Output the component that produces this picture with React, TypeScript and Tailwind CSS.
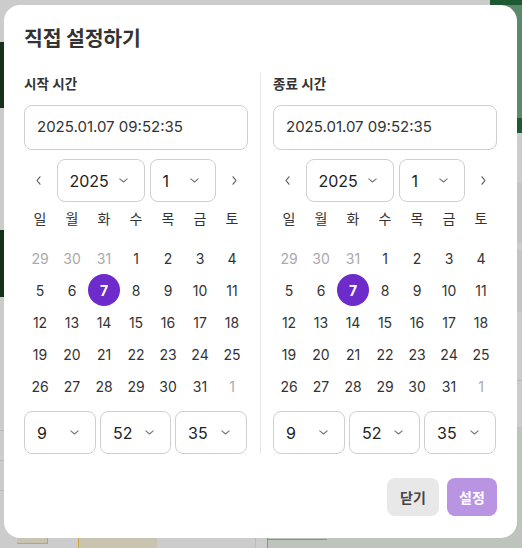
import React from "react";

const FONT = { fontFamily: "Inter, 'Noto Sans CJK KR', 'Noto Sans', sans-serif" };

function ChevronDown() {
  return (
    <svg width="9" height="5" viewBox="0 0 9 5" fill="none">
      <path d="M0.8 0.8L4.5 4L8.2 0.8" stroke="#777" strokeWidth="1.1" strokeLinecap="round" strokeLinejoin="round" />
    </svg>
  );
}

function ChevronSide({ dir }: { dir: "l" | "r" }) {
  return (
    <svg width="5" height="9" viewBox="0 0 5 9" fill="none">
      {dir === "l" ? (
        <path d="M4 0.8L1 4.5L4 8.2" stroke="#555" strokeWidth="1.1" strokeLinecap="round" strokeLinejoin="round" />
      ) : (
        <path d="M1 0.8L4 4.5L1 8.2" stroke="#555" strokeWidth="1.1" strokeLinecap="round" strokeLinejoin="round" />
      )}
    </svg>
  );
}

function SelectBox({ value, w }: { value: string; w: string }) {
  return (
    <div className={`${w} h-[43px] border border-[#cfcfcf] rounded-[8px] flex items-center justify-between pl-[12px] pr-[16px] bg-white`}>
      <span className="text-[16px] text-[#222] leading-none">{value}</span>
      <ChevronDown />
    </div>
  );
}

const WEEK = ["일", "월", "화", "수", "목", "금", "토"];
const DAYS: { d: number; muted?: boolean }[] = [
  { d: 29, muted: true }, { d: 30, muted: true }, { d: 31, muted: true },
  ...Array.from({ length: 31 }, (_, i) => ({ d: i + 1 })),
  { d: 1, muted: true },
];

function Column({ label }: { label: string }) {
  return (
    <div className="w-[224px] pt-[1px] flex flex-col">
      <div className="h-[20px] flex items-center text-[13.5px] font-semibold text-[#333] leading-[20px]">{label}</div>
      <div className="mt-[11px] h-[45px] border border-[#cfcfcf] rounded-[8px] flex items-center pl-[12px] text-[15px] text-[#333]">
        2025.01.07 09:52:35
      </div>
      <div className="mt-[9px] h-[43px] flex items-center justify-between">
        <div className="w-[28px] h-[28px] flex items-center justify-center">
          <ChevronSide dir="l" />
        </div>
        <div className="flex gap-[5px]">
          <SelectBox value="2025" w="w-[88px]" />
          <SelectBox value="1" w="w-[66px]" />
        </div>
        <div className="w-[28px] h-[28px] flex items-center justify-center">
          <ChevronSide dir="r" />
        </div>
      </div>
      <div className="grid grid-cols-7 h-[32px]">
        {WEEK.map((w) => (
          <div key={w} className="flex items-center justify-center text-[14px] text-[#333]">
            {w}
          </div>
        ))}
      </div>
      <div className="mt-[8px] grid grid-cols-7">
        {DAYS.map((x, i) => (
          <div key={i} className="h-[32px] flex items-center justify-center">
            {x.d === 7 && !x.muted ? (
              <div className="w-[32px] h-[32px] rounded-full bg-[#6d2bcb] flex items-center justify-center text-white font-bold text-[14px]">
                7
              </div>
            ) : (
              <span className={`text-[14px] ${x.muted ? "text-[#aaaaaa]" : "text-[#333]"}`}>{x.d}</span>
            )}
          </div>
        ))}
      </div>
      <div className="mt-[9px] flex gap-[4px]">
        <SelectBox value="9" w="w-[72px]" />
        <SelectBox value="52" w="w-[71px]" />
        <SelectBox value="35" w="w-[72px]" />
      </div>
    </div>
  );
}

export default function App() {
  return (
    <div className="relative w-[522px] h-[548px] overflow-hidden bg-[#cccccc]" style={FONT}>
      {/* backdrop page (dimmed) */}
      <div className="absolute left-0 top-[42px] w-[8px] h-[66px] bg-[#17301a]" />
      <div className="absolute left-0 top-[230px] w-[8px] h-[67px] bg-[#17301a]" />
      <div className="absolute left-0 top-[430px] w-[8px] h-px bg-[#bbbbbb]" />
      <div className="absolute left-0 top-[460px] w-[8px] h-px bg-[#bbbbbb]" />
      <div className="absolute left-0 top-[490px] w-[8px] h-px bg-[#bbbbbb]" />
      <div className="absolute left-[490px] top-0 w-[32px] h-[5px] bg-[#1d5a32]" />
      <div className="absolute left-[490px] top-[5px] w-[32px] h-[113px] bg-[#5b8a6a]" />
      <div className="absolute left-[490px] top-[118px] w-[32px] h-[15px] bg-[#1f5a34]" />
      <div className="absolute left-[490px] top-[183px] w-[32px] h-[60px] bg-[#c4c4c8]" />
      <div className="absolute left-[490px] top-[250px] w-[32px] h-[62px] bg-[#c4c4c8]" />
      <div className="absolute left-[490px] top-[380px] w-[32px] h-px bg-[#b8b8b8]" />
      <div className="absolute left-[490px] top-[427px] w-[32px] h-[121px] bg-[#bcc4bc]" />
      <div className="absolute left-[17px] top-[530px] w-[31px] h-[14px] bg-[#c8c4b0] border-r border-b border-[#c9a640]" />
      <div className="absolute left-[78px] top-[530px] w-[79px] h-[18px] bg-[#c8c4b0] border-l border-[#c9a640]" />
      <div className="absolute left-[255px] top-[530px] w-px h-[18px] bg-[#bbbbbb]" />
      <div className="absolute left-[267px] top-[530px] w-[255px] h-[18px] bg-[#bcc4bc] border-l border-[#7aa070]" />
      <div className="absolute left-[267px] top-[539px] w-[60px] h-px bg-[#7aa070]" />

      {/* modal */}
      <div className="absolute left-[4px] top-[5px] w-[513px] h-[533px] bg-white rounded-[16px] pl-[20px] pr-[20px] pt-[20px] flex flex-col">
        <h2 className="text-[20.5px] leading-[28px] font-bold text-[#333] tracking-[-0.2px]">직접 설정하기</h2>
        <div className="mt-[20px] flex">
          <Column label="시작 시간" />
          <div className="mx-[12px] w-px bg-[#e6e6e6]" />
          <Column label="종료 시간" />
        </div>
        <div className="mt-[24px] flex justify-end gap-[8px]">
          <button className="w-[52px] h-[38px] rounded-[8px] bg-[#e8e8e8] text-[14px] font-bold text-[#444]">닫기</button>
          <button className="w-[50px] h-[38px] rounded-[8px] bg-[#b994e2] text-[14px] font-bold text-white">설정</button>
        </div>
      </div>
    </div>
  );
}
